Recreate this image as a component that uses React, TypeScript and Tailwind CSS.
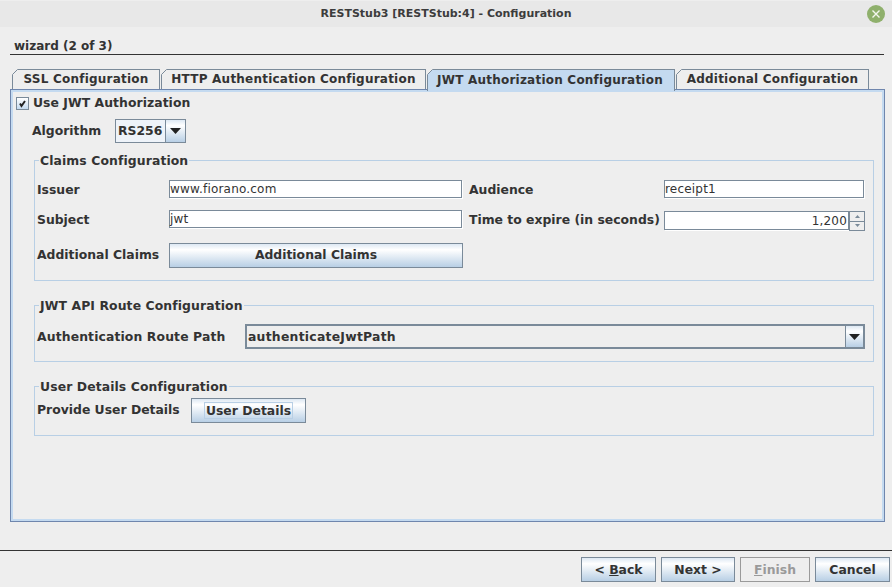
import React from "react";

const btn =
  "flex items-center justify-center border border-[#7a8a99] bg-[linear-gradient(#dde8f3,#ffffff_25%,#b8cfe5)] font-bold text-[12.4px] text-[#333333]";
const input =
  "flex items-center h-[18px] mr-px border border-[#7a8a99] shadow-[1px_1px_0_#ffffff] bg-white pr-px text-[12px] tracking-[0.2px] text-[#333333] leading-none";
const label = "text-[12.4px] font-bold text-[#333333] leading-none";
const legend = "ml-[4px] px-px text-[12.4px] tracking-[0.1px] font-bold text-[#333333] leading-[15px]";
const fieldset = "border border-[#b8cfe5] min-w-0";

function Arrow() {
  return (
    <svg width="11" height="6" viewBox="0 0 11 6">
      <path d="M0 0H11L5.5 6Z" fill="#222222" />
    </svg>
  );
}

function Tab({ text, width, active }: { text: string; width: string; active?: boolean }) {
  return (
    <div
      className={`relative flex items-center justify-center h-[20px] pb-px border border-b-0 border-[#7a8a99] text-[12px] font-bold text-[#333333] tracking-[0.22px] ${width} ${
        active ? "bg-[#c4daf0] h-[22px] pb-[5px] pr-[2px] z-10 -mb-[2px]" : "bg-[#eeeeee]"
      }`}
    >
      <svg className="absolute -left-px -top-px" width="6" height="6" viewBox="0 0 6 6">
        <path d="M0 0H6L0 6Z" fill="#eeeeee" />
        <path d="M0.5 5.5L5.5 0.5" stroke="#7a8a99" />
      </svg>
      {text}
    </div>
  );
}

export default function App() {
  return (
    <div className="flex flex-col w-[892px] h-[587px] overflow-hidden bg-[#eeeeee] font-['DejaVu_Sans',sans-serif]">
      <div className="flex items-center h-[26px] mt-px bg-[#e8e8e8] shrink-0">
        <div className="flex-1 pl-[25px] text-center text-[11px] font-bold text-[#3c3c3c]">
          RESTStub3 [RESTStub:4] - Configuration
        </div>
        <div className="flex items-center justify-center w-[18px] h-[18px] mr-[7px] rounded-full bg-[#8fb06c]">
          <svg width="10" height="10" viewBox="0 0 10 10">
            <path d="M1.5 1.5L8.5 8.5M8.5 1.5L1.5 8.5" stroke="#f4f7ef" strokeWidth="1.4" />
          </svg>
        </div>
      </div>

      <div className="mx-[10px] mr-[8px] h-[28px] pt-[12px] pl-[4px] border-b border-[#333333] text-[12px] font-bold text-[#333333] leading-[15px] shrink-0">
        wizard (2 of 3)
      </div>

      <div className="flex gap-px mt-[14px] ml-[12px] shrink-0">
        <Tab text="SSL Configuration" width="w-[148px]" />
        <Tab text="HTTP Authentication Configuration" width="w-[265px]" />
        <Tab text="JWT Authorization Configuration" width="w-[248px]" active />
        <Tab text="Additional Configuration" width="w-[193px]" />
      </div>

      <div className="mx-[10px] mr-[7px] h-[433px] border border-[#6f86ad] shrink-0">
        <div className="h-full border-2 border-[#c4daf0] pl-[3px] pr-[8px] pt-[3px]">
          <div className="flex items-center gap-[4px] h-[16px] mb-[8px] text-[12.4px] tracking-[0.05px] font-bold text-[#333333]">
            <div className="flex items-center justify-center w-[13px] h-[13px] border border-[#7a8a99] bg-[linear-gradient(#ffffff,#c4daf0)]">
              <svg width="9" height="9" viewBox="0 0 9 9">
                <path d="M2 4.5L3.5 7L7 2" fill="none" stroke="#222222" strokeWidth="2" />
              </svg>
            </div>
            Use JWT Authorization
          </div>

          <div className="flex items-center h-[24px] ml-[16px]">
            <span className={`${label} w-[83px]`}>Algorithm</span>
            <div className="flex h-[24px] w-[71px] border border-[#7a8a99]">
              <div className="flex items-center flex-1 pl-[2px] text-[12.4px] font-bold text-[#333333] bg-[#eef3f9]">
                RS256
              </div>
              <div className={`${btn} w-[20px] border-0 border-l`}>
                <Arrow />
              </div>
            </div>
          </div>

          <fieldset className={`${fieldset} ml-[18px] h-[128px] mt-[10px]`}>
            <legend className={legend}>Claims Configuration</legend>
            <div className="grid grid-cols-[132px_294px_201px_201px] grid-rows-[19px_20px_25px] gap-y-[11px] pl-[2px] pt-[12px]">
              <span className={`${label} self-center pt-px`}>Issuer</span>
              <div className={input}>www.fiorano.com</div>
              <span className={`${label} self-center pl-[6px] pt-px`}>Audience</span>
              <div className={input}>receipt1</div>

              <span className={`${label} self-center`}>Subject</span>
              <div className={input}>jwt</div>
              <span className={`${label} self-center pl-[6px] pt-px whitespace-nowrap`}>Time to expire (in seconds)</span>
              <div className="flex h-[20px] mt-px">
                <div className={`${input} flex-1 !h-[19px] justify-end !pr-[1px] !mr-0`}>1,200</div>
                <div className="flex flex-col w-[16px] h-[20px] border border-[#7a8a99] bg-[#eeeeee]">
                  <div className="flex items-center justify-center flex-1 border-b border-[#7a8a99]">
                    <svg width="5" height="3" viewBox="0 0 5 3">
                      <path d="M2.5 0L5 3H0Z" fill="#7a8a99" />
                    </svg>
                  </div>
                  <div className="flex items-center justify-center flex-1">
                    <svg width="5" height="3" viewBox="0 0 5 3">
                      <path d="M0 0H5L2.5 3Z" fill="#7a8a99" />
                    </svg>
                  </div>
                </div>
              </div>

              <span className={`${label} self-center pt-[3px]`}>Additional Claims</span>
              <div className={`${btn} h-[25px] mt-[2px]`}>Additional Claims</div>
            </div>
          </fieldset>

          <fieldset className={`${fieldset} ml-[18px] h-[64px] mt-[17px]`}>
            <legend className={legend}>JWT API Route Configuration</legend>
            <div className="flex items-center pl-[2px] pt-[11px]">
              <span className={`${label} w-[208px] pt-px tracking-[0.12px]`}>Authentication Route Path</span>
              <div className="flex h-[25px] w-[620px] border-2 border-[#7a8a99]">
                <div className="flex items-center flex-1 pl-[1px] pt-px text-[12.4px] tracking-[0.25px] font-bold text-[#333333] bg-[#eeeeee]">
                  authenticateJwtPath
                </div>
                <div className={`${btn} w-[18px] border-0 border-l`}>
                  <Arrow />
                </div>
              </div>
            </div>
          </fieldset>

          <fieldset className={`${fieldset} ml-[18px] h-[57px] mt-[17px]`}>
            <legend className={legend}>User Details Configuration</legend>
            <div className="flex pl-[2px] pt-[4px]">
              <span className={`${label} w-[154px] pt-[6px]`}>Provide User Details</span>
              <div className={`${btn} w-[115px] h-[25px]`}>
                <span className="px-px border border-[#b8cfe5] leading-[15px]">User Details</span>
              </div>
            </div>
          </fieldset>
        </div>
      </div>

      <div className="mt-[28px] border-t border-[#333333] shrink-0" />

      <div className="flex justify-end gap-[5px] pt-[6px] pr-[2px]">
        <div className={`${btn} w-[75px] h-[25px] pt-px`}>
          &lt;&nbsp;<span className="underline">B</span>ack
        </div>
        <div className={`${btn} w-[74px] h-[25px] pt-px`}>Next &gt;</div>
        <div className="flex items-center justify-center w-[70px] h-[25px] pt-px border border-[#9a9a9a] text-[12.4px] font-bold text-[#9a9a9a]">
          <span className="underline">F</span>inish
        </div>
        <div className={`${btn} w-[75px] h-[25px] pt-px`}>Cancel</div>
      </div>
    </div>
  );
}
